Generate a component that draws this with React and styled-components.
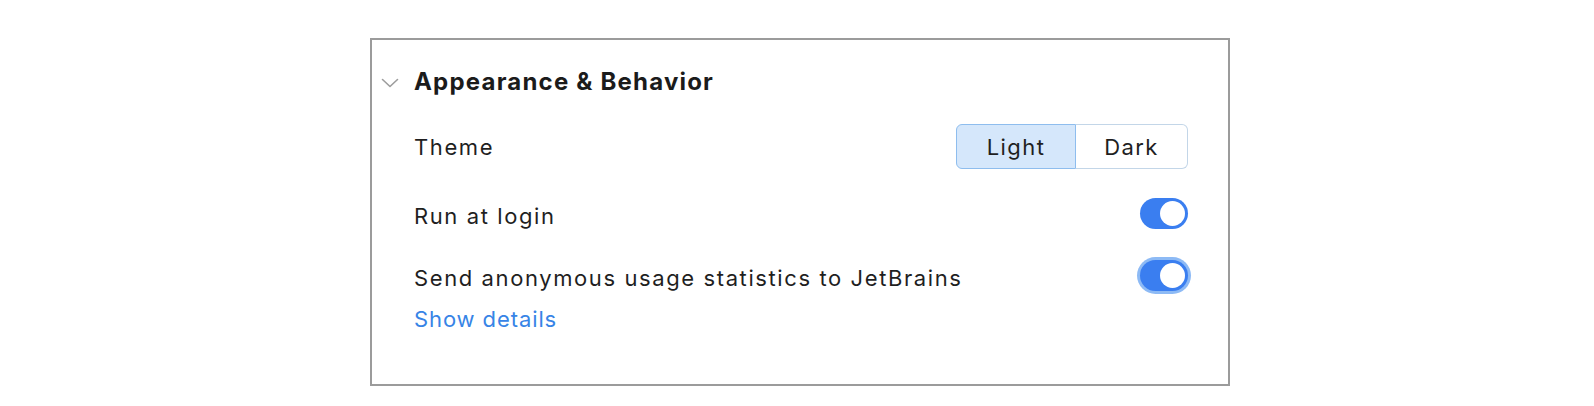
import React from "react";
import styled, { createGlobalStyle } from "styled-components";

const Global = createGlobalStyle`
  html, body { margin: 0; padding: 0; background: #ffffff; }
  body { font-family: Inter, "Noto Sans", sans-serif; color: #1f1f1f; }
`;

const Page = styled.div`
  padding: 38px 0 0 370px;
`;

const Panel = styled.section`
  box-sizing: border-box;
  width: 860px;
  height: 348px;
  border: 2px solid #9b9b9b;
  padding: 26px 40px 0 9px;
`;

const Header = styled.div`
  display: flex;
  align-items: center;
  height: 32px;
`;

const Chevron = styled.svg`
  width: 18px;
  height: 10px;
  margin: 2px 15px 0 0;
  flex: none;
`;

const Title = styled.h2`
  margin: 0;
  font-size: 24px;
  line-height: 32px;
  font-weight: 700;
  letter-spacing: 1.2px;
  color: #1b1b1b;
`;

const Body = styled.div`
  padding-left: 33px;
  display: flex;
  flex-direction: column;
`;

const Row = styled.div`
  display: flex;
  align-items: ${(p) => p.$align || "center"};
  justify-content: space-between;
  margin-top: ${(p) => p.$top}px;
`;

const Label = styled.span`
  font-size: 22px;
  line-height: 28px;
  letter-spacing: 1.6px;
  color: #1f1f1f;
`;

const LabelCol = styled.div`
  display: flex;
  flex-direction: column;
  padding-top: ${(p) => p.$pad}px;
`;

const Link = styled.a`
  font-size: 22px;
  line-height: 28px;
  letter-spacing: 0.9px;
  color: #3784e6;
  text-decoration: none;
  margin-top: 13px;
  cursor: pointer;
`;

const Segmented = styled.div`
  display: flex;
  height: 45px;
`;

const Segment = styled.button`
  box-sizing: border-box;
  height: 45px;
  width: ${(p) => p.$w}px;
  font-family: inherit;
  font-size: 22px;
  letter-spacing: 1.4px;
  color: #1f1f1f;
  padding: 0;
  background: ${(p) => (p.$active ? "#d5e7fb" : "#ffffff")};
  border: 1.5px solid ${(p) => (p.$active ? "#8ebdee" : "#c3d6e8")};
  border-left-width: ${(p) => (p.$first ? "1.5px" : "0")};
  border-radius: ${(p) => (p.$first ? "6px 0 0 6px" : "0 6px 6px 0")};
`;

const Toggle = styled.span`
  position: relative;
  display: inline-block;
  flex: none;
  width: 48px;
  height: 31px;
  border-radius: 16px;
  background: #3a7ef0;
  margin-bottom: 5px;
  box-shadow: ${(p) => (p.$focus ? "0 0 0 3px #8dbaf5" : "none")};
`;

const Knob = styled.span`
  position: absolute;
  top: 3px;
  right: 3px;
  width: 25px;
  height: 25px;
  border-radius: 50%;
  background: #ffffff;
`;

export default function App() {
  return (
    <>
      <Global />
      <Page>
        <Panel>
          <Header>
            <Chevron viewBox="0 0 18 10" fill="none">
              <path d="M1.5 1.5 L9 8.5 L16.5 1.5" stroke="#9d9d9d" strokeWidth="1.6" strokeLinecap="round" strokeLinejoin="round" />
            </Chevron>
            <Title>Appearance &amp; Behavior</Title>
          </Header>
          <Body>
            <Row $top={26}>
              <Label>Theme</Label>
              <Segmented>
                <Segment $w={120} $first $active>Light</Segment>
                <Segment $w={112}>Dark</Segment>
              </Segmented>
            </Row>
            <Row $top={29}>
              <Label>Run at login</Label>
              <Toggle><Knob /></Toggle>
            </Row>
            <Row $top={26} $align="flex-start">
              <LabelCol $pad={4}>
                <Label>Send anonymous usage statistics to JetBrains</Label>
                <Link>Show details</Link>
              </LabelCol>
              <Toggle $focus><Knob /></Toggle>
            </Row>
          </Body>
        </Panel>
      </Page>
    </>
  );
}
